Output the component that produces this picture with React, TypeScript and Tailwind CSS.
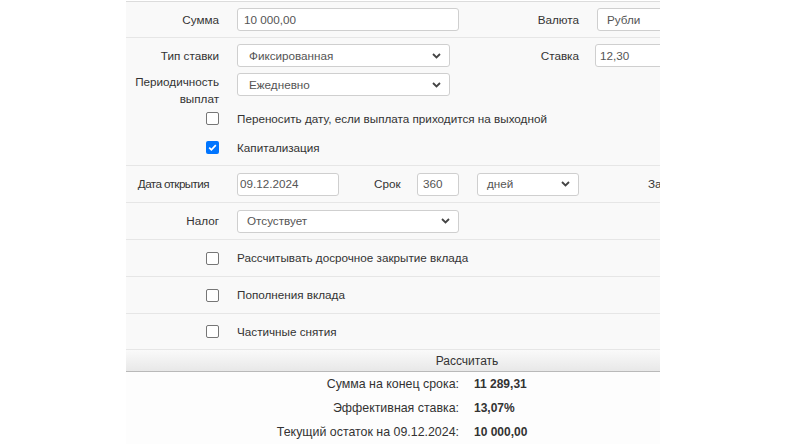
import React from "react";

const Chevron = () => (
  <svg width="9" height="6" viewBox="0 0 9 6" className="absolute right-[8px] top-1/2 -translate-y-1/2">
    <path d="M1 1l3.5 3.5L8 1" fill="none" stroke="#444" strokeWidth="1.8" />
  </svg>
);

const Input = ({ value, w, pl }: { value: string; w: string; pl: string }) => (
  <div className={`relative h-[23px] ${w} shrink-0 rounded-[3px] border border-[#cfcfcf] bg-white ${pl} flex items-center text-[11.7px] text-[#555]`}>
    {value}
  </div>
);

const Select = ({ value, w, pl }: { value: string; w: string; pl: string }) => (
  <div className={`relative h-[23px] ${w} shrink-0 rounded-[3px] border border-[#cfcfcf] bg-white ${pl} flex items-center text-[11.7px] text-[#555]`}>
    {value}
    <Chevron />
  </div>
);

const Check = ({ checked }: { checked?: boolean }) =>
  checked ? (
    <div className="flex h-[13px] w-[13px] shrink-0 items-center justify-center rounded-[2px] bg-[#0075ff]">
      <svg width="11" height="11" viewBox="0 0 11 11">
        <path d="M2.2 5.6l2.2 2.2 4.4-4.6" fill="none" stroke="white" strokeWidth="1.7" />
      </svg>
    </div>
  ) : (
    <div className="h-[13px] w-[13px] shrink-0 rounded-[2px] border border-[#767676] bg-white" />
  );

const CheckRow = ({ label, checked, h }: { label: string; checked?: boolean; h: string }) => (
  <div className={`flex ${h} items-center`}>
    <div className="ml-[80px] flex w-[13px]">
      <Check checked={checked} />
    </div>
    <span className="ml-[18px] text-[11.7px] text-[#333]">{label}</span>
  </div>
);

export default function App() {
  return (
    <div className="min-h-screen bg-white pt-[1px]" style={{ fontFamily: '"Liberation Sans", Arial, sans-serif' }}>
      <div className="ml-[126px] w-[534px] overflow-hidden border-t border-[#dcdcdc] bg-[#f9f9f9]">
        <div className="w-[682px]">
          {/* Row 1 */}
          <div className="flex h-[36px] items-center border-b border-[#e6e6e6]">
            <div className="w-[93px] text-right text-[11.7px] text-[#333]">Сумма</div>
            <div className="ml-[18px]">
              <Input value="10 000,00" w="w-[222px]" pl="pl-[6px]" />
            </div>
            <div className="w-[120px] text-right text-[11.7px] text-[#333]">Валюта</div>
            <div className="ml-[18px]">
              <Input value="Рубли" w="w-[140px]" pl="pl-[9px]" />
            </div>
          </div>

          {/* Row 2 group */}
          <div className="flex flex-col border-b border-[#e6e6e6] pt-[6px] pb-[3px]">
            <div className="flex h-[23px] items-center">
              <div className="w-[93px] text-right text-[11.7px] text-[#333]">Тип ставки</div>
              <div className="ml-[18px]">
                <Select value="Фиксированная" w="w-[213px]" pl="pl-[11px]" />
              </div>
              <div className="w-[129px] text-right text-[11.7px] text-[#333]">Ставка</div>
              <div className="ml-[16px]">
                <Input value="12,30" w="w-[140px]" pl="pl-[4px]" />
              </div>
            </div>
            <div className="mt-[6px] flex h-[31px] items-start">
              <div className="w-[93px] text-right text-[11.7px] leading-[17px] text-[#333]">
                Периодичность
                <br />
                выплат
              </div>
              <div className="ml-[18px]">
                <Select value="Ежедневно" w="w-[213px]" pl="pl-[11px]" />
              </div>
            </div>
            <CheckRow h="h-[29px]" label="Переносить дату, если выплата приходится на выходной" />
            <CheckRow h="h-[29px]" checked label="Капитализация" />
          </div>

          {/* Дата */}
          <div className="flex h-[37px] items-center border-b border-[#e6e6e6]">
            <div className="w-[83px] text-right text-[11.7px] tracking-[-0.6px] text-[#333]">Дата открытия</div>
            <div className="ml-[28px]">
              <Input value="09.12.2024" w="w-[102px]" pl="pl-[2px]" />
            </div>
            <div className="ml-[35px] w-[43px] text-[11.7px] text-[#333]">Срок</div>
            <div>
              <Input value="360" w="w-[42px]" pl="pl-[5px]" />
            </div>
            <div className="ml-[18px]">
              <Select value="дней" w="w-[102px]" pl="pl-[9px]" />
            </div>
            <div className="ml-[69px] text-[11.7px] text-[#333]">За</div>
          </div>

          {/* Налог */}
          <div className="flex h-[37px] items-center border-b border-[#e6e6e6]">
            <div className="w-[93px] text-right text-[11.7px] text-[#333]">Налог</div>
            <div className="ml-[18px]">
              <Select value="Отсуствует" w="w-[222px]" pl="pl-[9px]" />
            </div>
          </div>

          <div className="border-b border-[#e6e6e6]">
            <CheckRow h="h-[36px]" label="Рассчитывать досрочное закрытие вклада" />
          </div>
          <div className="border-b border-[#e6e6e6]">
            <CheckRow h="h-[36px]" label="Пополнения вклада" />
          </div>
          <div className="border-b border-[#e6e6e6]">
            <CheckRow h="h-[35px]" label="Частичные снятия" />
          </div>

          {/* Button */}
          <div className="flex h-[22px] items-center justify-center border-b border-[#b9b9b9] bg-gradient-to-b from-[#fafafa] to-[#e8e8e8] text-[12px] text-[#333]">
            Рассчитать
          </div>

          {/* Results */}
          <div className="bg-[#fdfdfd] pb-[10px]">
            {[
              ["Сумма на конец срока:", "11 289,31"],
              ["Эффективная ставка:", "13,07%"],
              ["Текущий остаток на 09.12.2024:", "10 000,00"],
            ].map(([l, v]) => (
              <div key={l} className="flex h-[24px] items-center">
                <div className="w-[333px] text-right text-[12.4px] text-[#333]">{l}</div>
                <div className="ml-[15px] text-[12px] font-bold text-[#333]">{v}</div>
              </div>
            ))}
          </div>
        </div>
      </div>
    </div>
  );
}
